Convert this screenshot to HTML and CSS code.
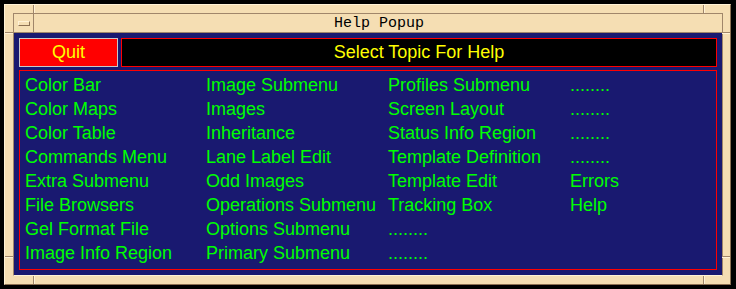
FILE: index.html
```html
<!DOCTYPE html>
<html lang="en">
<head>
    <meta charset="UTF-8">
    <title>Help Popup</title>
    <link rel="stylesheet" href="styles.css">
</head>
<body>

<div class="fenster">
    <!-- Rahmen-Ecken -->
    <span class="ecke ecke-v ecke-ol"></span>
    <span class="ecke ecke-h ecke-lo"></span>
    <span class="ecke ecke-v ecke-or"></span>
    <span class="ecke ecke-h ecke-ro"></span>
    <span class="ecke ecke-h ecke-lu"></span>
    <span class="ecke ecke-v ecke-ul"></span>
    <span class="ecke ecke-h ecke-ru"></span>
    <span class="ecke ecke-v ecke-ur"></span>

    <div class="innen">
        <div class="titelleiste">
            <div class="menuknopf"><span class="menustrich"></span></div>
            <div class="titel">Help Popup</div>
        </div>

        <div class="inhalt">
            <div class="kopfzeile">
                <button class="quit">Quit</button>
                <div class="thema">Select Topic For Help</div>
            </div>

            <div class="liste">
                <span>Color Bar</span>
                <span>Color Maps</span>
                <span>Color Table</span>
                <span>Commands Menu</span>
                <span>Extra Submenu</span>
                <span>File Browsers</span>
                <span>Gel Format File</span>
                <span>Image Info Region</span>

                <span>Image Submenu</span>
                <span>Images</span>
                <span>Inheritance</span>
                <span>Lane Label Edit</span>
                <span>Odd Images</span>
                <span>Operations Submenu</span>
                <span>Options Submenu</span>
                <span>Primary Submenu</span>

                <span>Profiles Submenu</span>
                <span>Screen Layout</span>
                <span>Status Info Region</span>
                <span>Template Definition</span>
                <span>Template Edit</span>
                <span>Tracking Box</span>
                <span>........</span>
                <span>........</span>

                <span>........</span>
                <span>........</span>
                <span>........</span>
                <span>........</span>
                <span>Errors</span>
                <span>Help</span>
            </div>
        </div>
    </div>
</div>

</body>
</html>
```

FILE: styles.css
```css
body {
    margin: 0;
    background: #000;
    font-family: "Liberation Sans", Arial, sans-serif;
}
.fenster {
    position: relative;
    margin: 4px;
    width: 727px;
    height: 281px;
    box-sizing: border-box;
    background: #f5deb3;
    border: 1px solid;
    border-color: #fff2d6 #8c7052 #8c7052 #fff2d6;
    padding: 8px 7px 8px 8px;
}
.ecke {
    position: absolute;
    background: #a0866a;
}
.ecke-v {
    width: 1px;
    height: 8px;
    box-shadow: 1px 0 0 #fff2d6;
}
.ecke-h {
    height: 1px;
    width: 8px;
    box-shadow: 0 1px 0 #fff2d6;
}
.ecke-ol { left: 28px; top: 0; }
.ecke-or { left: 698px; top: 0; }
.ecke-ul { left: 28px; bottom: 0; }
.ecke-ur { left: 698px; bottom: 0; }
.ecke-lo { left: 0; top: 27px; }
.ecke-lu { left: 0; top: 251px; }
.ecke-ro { right: 0; top: 27px; }
.ecke-ru { right: 0; top: 251px; }
.innen {
    height: 100%;
    box-sizing: border-box;
    display: flex;
    flex-direction: column;
    border: 1px solid;
    border-color: #a0866a #a0866a #fff2d6 #a0866a;
}
.titelleiste {
    display: flex;
    height: 18px;
    border-bottom: 1px solid #a0866a;
}
.menuknopf {
    width: 19px;
    border-right: 1px solid #a0866a;
    display: flex;
    align-items: center;
    justify-content: center;
}
.menustrich {
    width: 10px;
    height: 3px;
    border: 1px solid;
    border-color: #fff2d6 #8c7052 #8c7052 #fff2d6;
}
.titel {
    flex: 1;
    text-align: center;
    font-family: "Liberation Mono", "DejaVu Sans Mono", monospace;
    font-size: 15px;
    line-height: 19px;
    color: #000;
    padding-left: 2px;
}
.inhalt {
    flex: 1;
    background: #191970;
    padding: 5px 5px 5px 5px;
    display: flex;
    flex-direction: column;
    gap: 3px;
}
.kopfzeile {
    display: flex;
    gap: 3px;
    height: 29px;
}
.quit {
    width: 99px;
    margin: 0;
    padding: 0;
    background: #ff0000;
    border: 1px solid #c8c8c8;
    color: #ffff00;
    font-family: "Liberation Sans", Arial, sans-serif;
    font-size: 18px;
}
.thema {
    flex: 1;
    background: #000;
    border: 1px solid #ff0000;
    color: #ffff00;
    font-size: 18px;
    line-height: 27px;
    text-align: center;
}
.liste {
    flex: 1;
    border: 1px solid #ff0000;
    padding: 2px 0 0 5px;
    display: grid;
    grid-template-columns: 181px 182px 182px auto;
    grid-template-rows: repeat(8, 24px);
    grid-auto-flow: column;
    color: #00ff00;
    font-size: 18px;
    line-height: 24px;
}
.liste span {
    white-space: nowrap;
}
```
